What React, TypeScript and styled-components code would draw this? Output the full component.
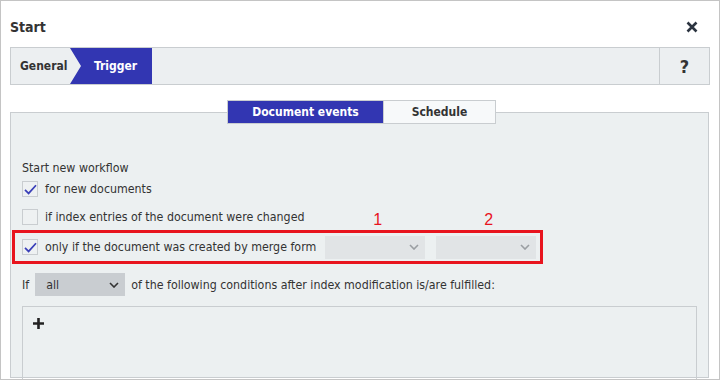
import styled, { createGlobalStyle } from 'styled-components';

const GlobalStyle = createGlobalStyle`
    html, body {
        margin: 0;
        padding: 0;
        background: #ffffff;
    }
    body {
        font-family: "DejaVu Sans Condensed", "DejaVu Sans", sans-serif;
        font-size: 12.3px;
        color: #333333;
    }
`;

const Dialog = styled.div`
    box-sizing: border-box;
    width: 720px;
    height: 380px;
    border: 1px solid #c4c4c4;
    padding: 0 9px;
    display: flex;
    flex-direction: column;
    overflow: hidden;
    background: #ffffff;
`;

const Header = styled.div`
    height: 46px;
    padding-top: 6px;
    box-sizing: border-box;
    display: flex;
    justify-content: space-between;
    align-items: center;
`;

const Title = styled.h1`
    margin: 0;
    font-size: 14px;
    font-weight: bold;
    color: #333333;
`;

const CloseButton = styled.button`
    border: 0;
    background: none;
    padding: 0;
    margin-right: 12px;
    width: 12px;
    height: 12px;
    display: flex;
    cursor: pointer;
`;

const Steps = styled.div`
    height: 38px;
    box-sizing: border-box;
    border: 1px solid #c9cdd0;
    background: #eceff1;
    display: flex;
    align-items: stretch;
`;

const Step = styled.div<{ $active?: boolean }>`
    box-sizing: border-box;
    width: ${(p) => (p.$active ? '82px' : '60px')};
    display: flex;
    align-items: center;
    font-weight: bold;
    font-size: 12px;
    padding-left: ${(p) => (p.$active ? '24px' : '9px')};
    margin-left: ${(p) => (p.$active ? '-1px' : '0')};
    background: ${(p) => (p.$active ? '#3236b2' : 'transparent')};
    color: ${(p) => (p.$active ? '#ffffff' : '#333333')};
    clip-path: ${(p) => (p.$active ? 'polygon(0 0, 100% 0, 100% 100%, 0 100%, 11px 50%)' : 'none')};
`;

const HelpCell = styled.div`
    margin-left: auto;
    width: 49px;
    border-left: 1px solid #c9cdd0;
    display: flex;
    align-items: center;
    justify-content: center;
    font-weight: bold;
    font-size: 18px;
    color: #333333;
`;

const Panel = styled.div`
    flex: 1;
    margin-top: 27px;
    margin-right: 1px;
    margin-bottom: 1px;
    border: 1px solid #c9cdd0;
    background: #ecf0f1;
    padding: 0 11px;
    display: flex;
    flex-direction: column;
`;

const TabRow = styled.div`
    display: flex;
    justify-content: center;
    margin-top: -13px;
    margin-left: 4px;
`;

const Tab = styled.div<{ $active?: boolean; $width: number }>`
    width: ${(p) => p.$width}px;
    height: 24px;
    box-sizing: border-box;
    border: 1px solid #c9cdd0;
    margin-left: ${(p) => (p.$active ? '0' : '-1px')};
    background: ${(p) => (p.$active ? '#3236b2' : '#f7f9fa')};
    color: ${(p) => (p.$active ? '#ffffff' : '#333333')};
    font-weight: bold;
    font-size: 12px;
    display: flex;
    align-items: center;
    justify-content: center;
`;

const SectionLabel = styled.div`
    margin-top: 37px;
    height: 14px;
    line-height: 14px;
`;

const OptionRow = styled.label`
    display: flex;
    align-items: center;
    gap: 7px;
    height: 28px;
    cursor: pointer;
`;

const MarkedRow = styled.div`
    position: relative;
    display: flex;
    align-items: center;
    gap: 7px;
    height: 34px;
    box-sizing: border-box;
    width: 531px;
    margin: -1px 0 0 -10px;
    padding-left: 7px;
    border: 3px solid #e8141e;
`;

const Box = styled.span`
    width: 16px;
    height: 16px;
    box-sizing: border-box;
    border: 1px solid #c9cdd0;
    background: #eef1f2;
    display: flex;
    align-items: center;
    justify-content: center;
    flex-shrink: 0;
`;

const Select = styled.div<{ $dark?: boolean; $width: number }>`
    position: relative;
    width: ${(p) => p.$width}px;
    height: 23px;
    box-sizing: border-box;
    background: ${(p) => (p.$dark ? '#c9cdd1' : '#e1e4e6')};
    display: flex;
    align-items: center;
    justify-content: space-between;
    padding: 0 6px 0 11px;
    color: #333333;
`;

const SelectGroup = styled.div`
    display: flex;
    gap: 11px;
    margin-left: 2px;
`;

const Marker = styled.span`
    position: absolute;
    top: -25px;
    left: 48px;
    color: #e8141e;
    font-family: "Liberation Sans", Arial, sans-serif;
    font-size: 16px;
`;

const ConditionLine = styled.div`
    display: flex;
    align-items: center;
    gap: 6px;
    margin-top: 9px;
    height: 23px;
`;

const ConditionBox = styled.div`
    flex: 1;
    margin-top: 10px;
    margin-bottom: -2px;
    border: 1px solid #c9cdd0;
    border-bottom: 0;
    padding: 8px 10px;
`;

const PlusIcon = styled.span`
    display: block;
    width: 11px;
    height: 11px;
    margin-top: 3px;
`;

function Check() {
    return (
        <svg width="13" height="11" viewBox="0 0 13 11">
            <path d="M1 5.8 L4.6 9.4 L12 1.2" fill="none" stroke="#3a3fb8" strokeWidth="1.7" />
        </svg>
    );
}

function Chevron({ dark }: { dark?: boolean }) {
    return (
        <svg width="10" height="6" viewBox="0 0 10 6">
            <path d="M1 1 L5 5 L9 1" fill="none" stroke={dark ? '#333333' : '#9a9ea2'} strokeWidth="1.6" />
        </svg>
    );
}

function App() {
    return (
        <Dialog>
            <GlobalStyle />
            <Header>
                <Title>Start</Title>
                <CloseButton>
                    <svg width="12" height="12" viewBox="0 0 12 12">
                        <path d="M1.5 1.5 L10.5 10.5 M10.5 1.5 L1.5 10.5" stroke="#2b3440" strokeWidth="2.6" />
                    </svg>
                </CloseButton>
            </Header>

            <Steps>
                <Step>General</Step>
                <Step $active>Trigger</Step>
                <HelpCell>?</HelpCell>
            </Steps>

            <Panel>
                <TabRow>
                    <Tab $active $width={157}>Document events</Tab>
                    <Tab $width={113}>Schedule</Tab>
                </TabRow>

                <SectionLabel>Start new workflow</SectionLabel>
                <OptionRow>
                    <Box><Check /></Box>
                    for new documents
                </OptionRow>
                <OptionRow>
                    <Box />
                    if index entries of the document were changed
                </OptionRow>
                <MarkedRow>
                    <Box><Check /></Box>
                    only if the document was created by merge form
                    <SelectGroup>
                        <Select $width={100}>
                            <Marker>1</Marker>
                            <span />
                            <Chevron />
                        </Select>
                        <Select $width={100}>
                            <Marker>2</Marker>
                            <span />
                            <Chevron />
                        </Select>
                    </SelectGroup>
                </MarkedRow>

                <ConditionLine>
                    If
                    <Select $dark $width={90}>
                        all
                        <Chevron dark />
                    </Select>
                    of the following conditions after index modification is/are fulfilled:
                </ConditionLine>

                <ConditionBox>
                    <PlusIcon>
                        <svg width="11" height="11" viewBox="0 0 11 11">
                            <path d="M5.5 0 V11 M0 5.5 H11" stroke="#222222" strokeWidth="2.6" />
                        </svg>
                    </PlusIcon>
                </ConditionBox>
            </Panel>
        </Dialog>
    );
}

export default App;
